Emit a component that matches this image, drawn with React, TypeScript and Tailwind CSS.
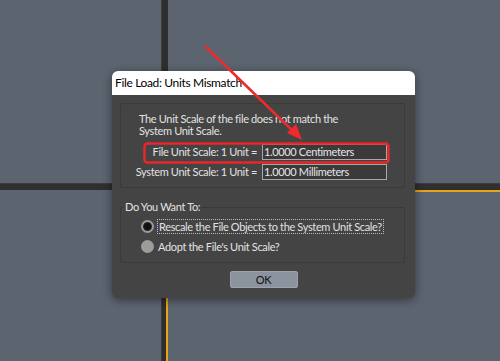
import React from 'react'

// 3ds Max style "units mismatch" dialog on top of a viewport grid
const FONT = { fontFamily: 'Lato, "Noto Sans", sans-serif' }

function UnitRow({ label, value }: { label: string; value: string }) {
  return (
    <div className="flex items-center h-[16px]">
      <span className="w-[141px] text-right pr-[5px] whitespace-nowrap">{label}</span>
      <div className="w-[125px] h-[16px] border border-[#a8a8a8] bg-[#3a3a3a] pl-[1px] leading-[14px] text-[#e6e6e6] whitespace-nowrap">
        {value}
      </div>
    </div>
  )
}

function Radio({ checked }: { checked?: boolean }) {
  return checked ? (
    <span className="w-[13px] h-[13px] shrink-0 rounded-full bg-[#9a9a9a] flex items-center justify-center">
      <span className="w-[9px] h-[9px] rounded-full bg-[#111] border border-[#222]" />
    </span>
  ) : (
    <span className="w-[13px] h-[13px] shrink-0 rounded-full bg-[#9c9c9c]" />
  )
}

export default function App() {
  return (
    <div className="relative w-[500px] h-[361px] overflow-hidden bg-[#5c6470]" style={FONT}>
      {/* viewport splitter bars */}
      <div className="absolute left-[161px] top-0 w-[7px] h-[361px] bg-[#2f2f2f] border-l border-[#3c3c3c]" />
      <div className="absolute left-0 top-[183px] w-[500px] h-[7px] bg-[#2f2f2f] border-t border-[#3c3c3c]" />
      <div className="absolute left-[415px] top-[190px] w-[85px] h-[2px] bg-[#e8a317]" />
      <div className="absolute left-[166px] top-[298px] w-[2px] h-[63px] bg-[#e8a317]" />

      {/* dialog */}
      <div className="absolute left-[112px] top-[71px] w-[303px] h-[227px] rounded-[6px] overflow-hidden bg-[#444444] shadow-[0_2px_10px_rgba(0,0,0,0.45)] flex flex-col">
        <div className="h-[24px] bg-white flex items-center pl-[3px] text-[12px] tracking-[-0.35px] text-black">
          File Load: Units Mismatch
        </div>

        <div className="flex-1 px-[8px] pt-[8px] text-[11px] tracking-[-0.35px] text-[#e2e2e2]">
          <div className="w-[285px] h-[85px] border border-[#3a3a3a] rounded-[2px] pt-[9px]">
            <p className="pl-[18px] leading-[12px]">
              The Unit Scale of the file does not match the
              <br />
              System Unit Scale.
            </p>
            <div className="mt-[7px] flex flex-col gap-[4px]">
              <UnitRow label="File Unit Scale: 1 Unit =" value="1.0000 Centimeters" />
              <UnitRow label="System Unit Scale: 1 Unit =" value="1.0000 Millimeters" />
            </div>
          </div>

          <div className="relative mt-[19px] w-[285px] h-[56px] border border-[#3a3a3a] rounded-[2px]">
            <span className="absolute left-[3px] -top-[8px] bg-[#444444] px-[1px] leading-[14px]">Do You Want To:</span>
            <div className="pl-[20px] pt-[11px] flex flex-col gap-[6px]">
              <div className="flex items-center gap-[3px]">
                <Radio checked />
                <span className="border border-dotted border-[#bdbdbd] px-[1px] leading-[13px] whitespace-nowrap">
                  Rescale the File Objects to the System Unit Scale?
                </span>
              </div>
              <div className="flex items-center gap-[4px]">
                <Radio />
                <span className="leading-[13px] whitespace-nowrap">Adopt the File's Unit Scale?</span>
              </div>
            </div>
          </div>

          <div className="mt-[8px] flex justify-center">
            <button className="w-[68px] h-[17px] rounded-[2px] bg-[#8b939e] text-[#111] text-[11px] leading-[15px] border border-[#9ba3ad]">
              OK
            </button>
          </div>
        </div>
      </div>

      {/* annotation: red box and arrow */}
      <svg className="absolute left-0 top-0" width="500" height="361" viewBox="0 0 500 361">
        <rect x="144.5" y="143.5" width="244" height="19" rx="3" fill="none" stroke="#e8262b" strokeWidth="2.5" />
        <line x1="205" y1="46" x2="295" y2="133" stroke="#ee2a2a" strokeWidth="2.5" />
        <polygon points="302,140 287,133 296,124" fill="#ee2a2a" />
      </svg>
    </div>
  )
}
